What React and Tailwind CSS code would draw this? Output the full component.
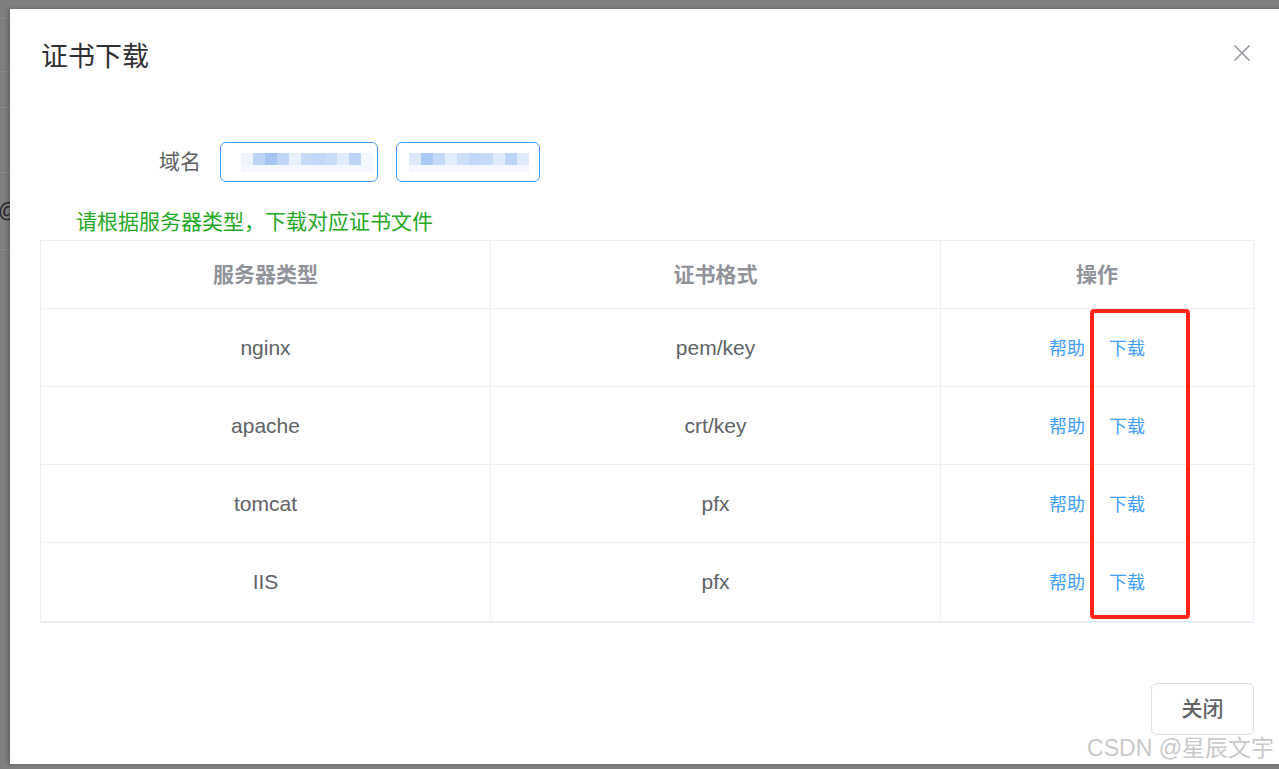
import React from 'react';

const font = { fontFamily: '"Liberation Sans", "Noto Sans CJK SC", sans-serif' };

const rows = [
  { server: 'nginx', format: 'pem/key' },
  { server: 'apache', format: 'crt/key' },
  { server: 'tomcat', format: 'pfx' },
  { server: 'IIS', format: 'pfx' },
];

// blurred domain text, drawn as pixel blocks
const blurA = ['#eef4fd', '#bcd5f7', '#a5c6f5', '#bfd6f7', '#e8f0fc', '#c6dbf8', '#c2d8f8', '#c9ddf8', '#e0ebfb', '#bcd5f7', '#f3f7fe'];
const blurB = ['#dde9fb', '#a9c9f6', '#c4d9f8', '#e2edfc', '#cddff9', '#c2d8f8', '#c6dbf8', '#dfeafb', '#bcd5f7', '#dfeafb'];

const BlurInput = ({ width, offset, blocks }) => (
  <div className={`${width} h-[40px] rounded-[6px] border border-[#409eff] flex flex-col justify-center`}>
    <div className="flex" style={{ paddingLeft: offset }}>
      {blocks.map((c, i) => (
        <div key={i} className="w-[12px] h-[12px]" style={{ backgroundColor: c }} />
      ))}
    </div>
    <div className="flex h-[7px]" style={{ paddingLeft: offset }}>
      {blocks.map((c, i) => (
        <div key={i} className="w-[12px] h-[7px] bg-[#f4f8fe]" />
      ))}
    </div>
  </div>
);

const App = () => {
  return (
    <div className="relative w-[1279px] h-[769px] overflow-hidden bg-[#7f7f7f] flex" style={font}>
      {/* page behind the overlay */}
      <div className="w-[10px] shrink-0 flex flex-col">
        <div className="h-[18px]" />
        <div className="h-px bg-[#8b8b8b]" />
        <div className="h-[52px]" />
        <div className="h-px bg-[#8b8b8b]" />
        <div className="h-[35px]" />
        <div className="h-px bg-[#8b8b8b]" />
        <div className="h-[64px]" />
        <div className="h-px bg-[#8b8b8b]" />
        <div className="h-[24px]" />
        <div className="h-[26px] overflow-hidden">
          <span className="block text-[20px] leading-[26px] text-[#222] -ml-[2px]">@</span>
        </div>
        <div className="h-[26px]" />
        <div className="h-px bg-[#8b8b8b]" />
      </div>

      {/* dialog */}
      <div className="relative mt-[9px] w-[1274px] h-[755px] shrink-0 bg-white shadow-[-2px_0_4px_rgba(0,0,0,0.25)]">
        <div className="flex items-start justify-between pl-[31px] pr-[34px] pt-[30px]">
          <span className="text-[27px] leading-[36px] text-[#303133]">证书下载</span>
          <svg width="16" height="16" viewBox="0 0 16 16" className="mt-[6px]">
            <path d="M0.5 0.5 L15.5 15.5 M15.5 0.5 L0.5 15.5" stroke="#909399" strokeWidth="1.5" fill="none" />
          </svg>
        </div>

        <div className="px-[30px]">
          <div className="flex items-center mt-[67px]">
            <div className="w-[180px] pr-[19px] text-right text-[21px] leading-[40px] text-[#606266]">域名</div>
            <BlurInput width="w-[158px]" offset={20} blocks={blurA} />
            <div className="w-[18px]" />
            <BlurInput width="w-[144px]" offset={12} blocks={blurB} />
          </div>

          <div className="mt-[26px] pl-[36px] text-[21px] leading-[28px] text-[#24a824]">
            请根据服务器类型，下载对应证书文件
          </div>

          <div className="relative mt-[4px] border border-b-2 border-[#ebeef5]">
            <div className="grid grid-cols-[450px_450px_1fr] h-[68px] border-b border-[#ebeef5] text-[21px] font-bold text-[#909399]">
              <div className="flex items-center justify-center border-r border-[#ebeef5]">服务器类型</div>
              <div className="flex items-center justify-center border-r border-[#ebeef5]">证书格式</div>
              <div className="flex items-center justify-center">操作</div>
            </div>
            {rows.map((r, i) => (
              <div
                key={r.server}
                className={`grid grid-cols-[450px_450px_1fr] h-[78px] text-[21px] text-[#606266] ${i < rows.length - 1 ? 'border-b border-[#ebeef5]' : ''}`}
              >
                <div className="flex items-center justify-center border-r border-[#ebeef5]">{r.server}</div>
                <div className="flex items-center justify-center border-r border-[#ebeef5]">{r.format}</div>
                <div className="flex items-center justify-center gap-[24px] pt-[3px] text-[18px] text-[#409eff]">
                  <span>帮助</span>
                  <span>下载</span>
                </div>
              </div>
            ))}
            {/* red highlight box */}
            <div className="absolute left-[1049px] top-[68px] w-[100px] h-[310px] border-4 border-[#ff2419] rounded-[4px]" />
          </div>

          <div className="flex justify-end mt-[60px]">
            <div className="w-[103px] h-[52px] rounded-[6px] border border-[#dcdfe6] flex items-center justify-center text-[21px] font-medium text-[#606266]">
              关闭
            </div>
          </div>
        </div>
      </div>

      {/* watermark */}
      <div className="absolute right-[5px] bottom-[7px] text-[23px] leading-[28px] text-[#c9c9c9] [text-shadow:0_0_1px_#ffffff]">
        CSDN @星辰文宇
      </div>
    </div>
  );
};

export default App;
